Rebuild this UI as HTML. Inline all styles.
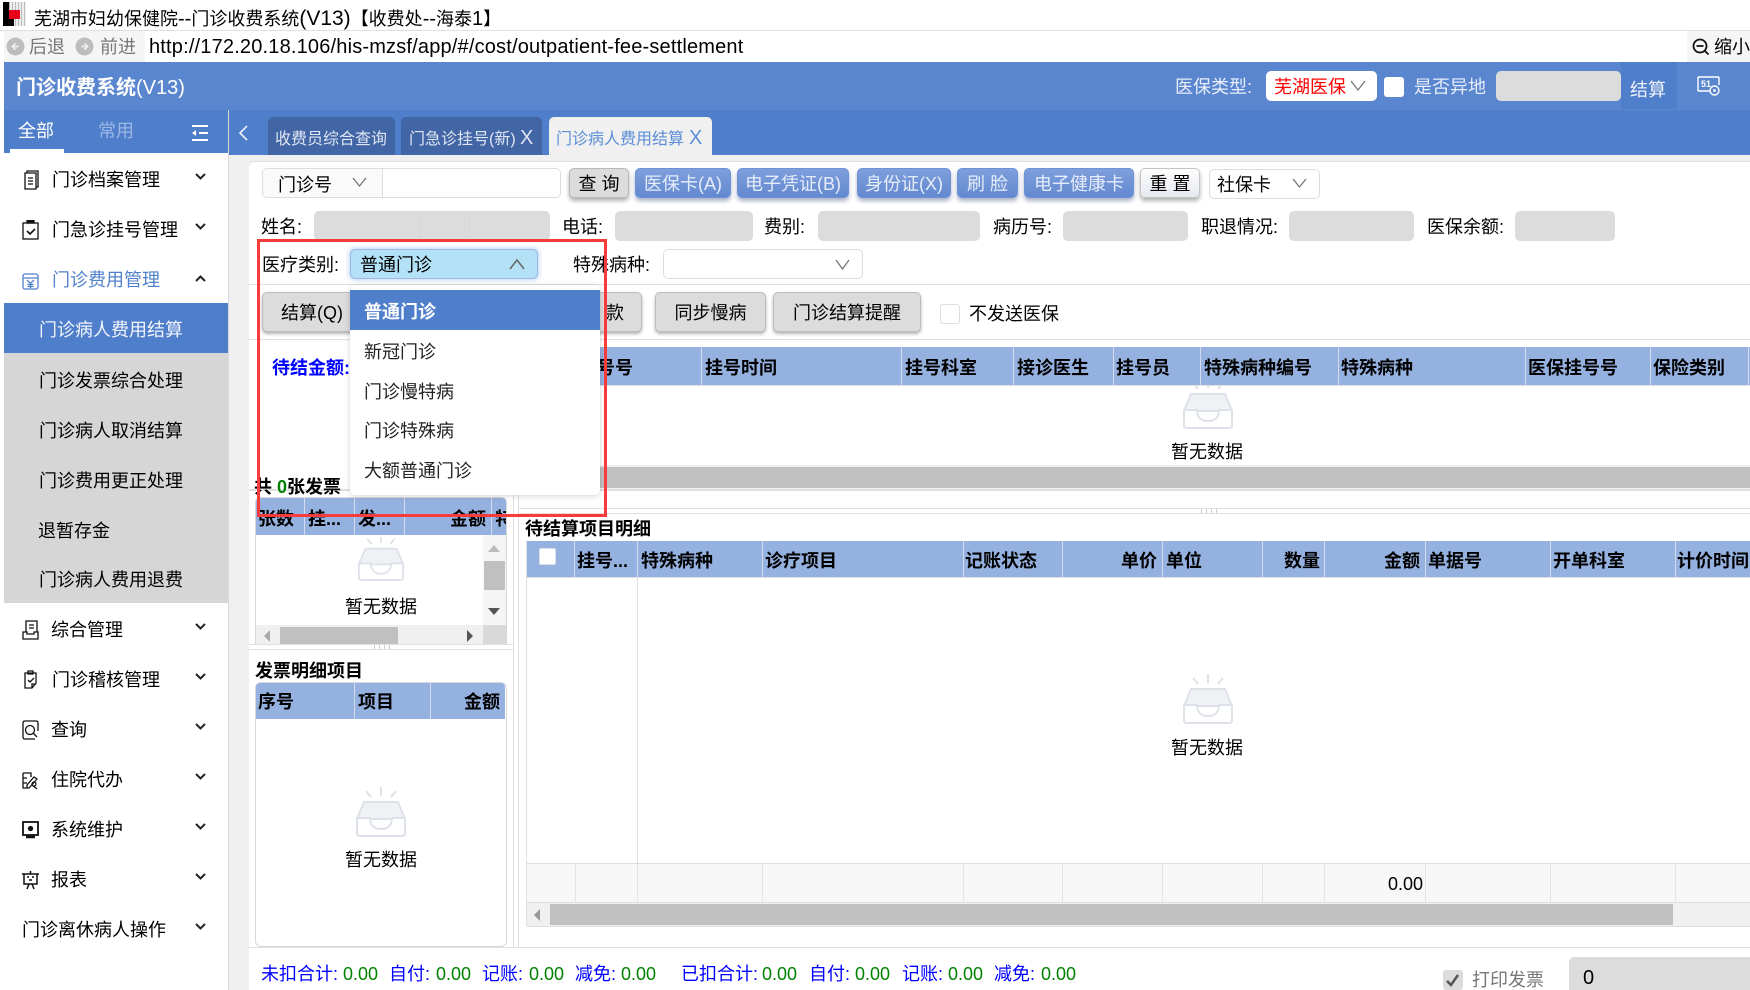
<!DOCTYPE html>
<html lang="zh"><head><meta charset="utf-8"><title>门诊收费系统</title>
<style>
html,body{margin:0;padding:0;width:1750px;height:990px;overflow:hidden;background:#fff}
body{position:relative;font-family:"Liberation Sans","WenQuanYi Zen Hei","Noto Sans CJK SC",sans-serif;font-size:18px;color:#000}
div,svg{position:absolute}
.t{white-space:nowrap;line-height:24px;height:24px;margin-top:1px}
.z{margin-top:0}
.b{font-weight:bold}
.r{text-align:right}
.c{text-align:center}
.ln{background:#e0e0e0}
.in{background:#dcdcdc;border-radius:5px;height:30px;top:211px}
.btn{border-radius:5px;text-align:center;line-height:30px;height:30px;top:168px;box-sizing:border-box;white-space:nowrap}
.bl{background:linear-gradient(#7f9fdc,#6289d0);border:1px solid #6d93d6;color:#e6edfa;box-shadow:0 3px 4px rgba(40,60,110,.4)}
.gr{background:#dcdcdc;border:1px solid #b8b8b8;box-shadow:0 3px 4px rgba(0,0,0,.3)}
.b4{background:#dcdcdc;border:1px solid #bdbdbd;border-radius:5px;top:292px;height:40px;line-height:40px;box-shadow:0 2px 3px rgba(0,0,0,.3);box-sizing:border-box;text-align:center;white-space:nowrap}
.th{background:#95b1e0}
.dv{background:#d4dceb;width:1px}
.m{left:52px}
.s{left:39px}
.ic{left:22px;width:17px;height:20px;fill:none;stroke:#111;stroke-width:1.3}
.ch{left:195px;width:11px;height:7px;fill:none;stroke:#222;stroke-width:2}
.bu{color:#00f}.gn{color:#008000}
.dd{left:364px}
</style></head><body>
<svg width="0" height="0" style="left:0;top:0"><defs>
<symbol id="em" viewBox="0 0 50 52">
<path d="M10 6l5 6M25 2v9M40 6l-5 6" stroke="#dde1e9" stroke-width="2" fill="none"/>
<path d="M8 17H42L49 34H1Z" fill="#eff1f4" stroke="#dde1e9" stroke-width="2" stroke-linejoin="round"/>
<path d="M1 33H14C14 40 18 44 25 44S36 40 36 33H49V48Q49 51 46 51H4Q1 51 1 48Z" fill="#fff" stroke="#dde1e9" stroke-width="2" stroke-linejoin="round"/>
</symbol></defs></svg>

<!-- title bar -->
<div style="left:3px;top:2px;width:23px;height:24px;background:repeating-linear-gradient(90deg,#bbb 0 1px,#eee 1px 3px)"></div>
<div style="left:3px;top:2px;width:6px;height:24px;background:#000"></div>
<div style="left:9px;top:10px;width:11px;height:9px;background:#e8001c"></div>
<div style="left:9px;top:19px;width:5px;height:7px;background:#000"></div>
<div class="t" style="left:34px;top:6px">芜湖市妇幼保健院<span style="font-size:20px">--</span>门诊收费系统<span style="font-size:21px">(V13)</span>【收费处<span style="font-size:20px">--</span>海泰<span style="font-size:20px">1</span>】</div>
<div class="ln" style="left:0;top:30px;width:1750px;height:1px"></div>

<!-- address bar -->
<div style="left:0;top:31px;width:4px;height:959px;background:#fff"></div>
<div style="left:4px;top:31px;width:141px;height:31px;background:#f5f5f5"></div>
<svg style="left:6px;top:37px" width="19" height="19" viewBox="0 0 18 18"><circle cx="9" cy="9" r="8.500" fill="#bdbdbd"/><path d="M12 9H6M9 6L6 9l3 3" stroke="#eee" stroke-width="1.600" fill="none"/></svg>
<svg style="left:75px;top:37px" width="19" height="19" viewBox="0 0 18 18"><circle cx="9" cy="9" r="8.500" fill="#bdbdbd"/><path d="M6 9h6M9 6l3 3-3 3" stroke="#eee" stroke-width="1.600" fill="none"/></svg>
<div class="t" style="left:29px;top:34px;color:#777">后退</div>
<div class="t" style="left:100px;top:34px;color:#777">前进</div>
<div class="t z" style="left:149px;top:35px;font-size:20px;letter-spacing:.18px">http://172.20.18.106/his-mzsf/app/#/cost/outpatient-fee-settlement</div>
<div style="left:1687px;top:31px;width:63px;height:31px;background:#f5f5f5"></div>
<svg style="left:1692px;top:38px" width="18" height="18" viewBox="0 0 18 18"><circle cx="8" cy="8" r="6.500" fill="none" stroke="#111" stroke-width="1.800"/><path d="M4.500 8h7M12.500 12.500l4 4" stroke="#111" stroke-width="1.800"/></svg>
<div class="t" style="left:1714px;top:34px">缩小</div>

<!-- header -->
<div style="left:4px;top:62px;width:1746px;height:48px;background:#5a86cf"></div>
<div class="t b" style="left:16px;top:75px;font-size:20px;color:#fff">门诊收费系统<span style="font-size:20px;font-weight:normal">(V13)</span></div>
<div class="t z" style="left:1175px;top:75px;color:#e8eefa">医保类型:</div>
<div style="left:1266px;top:71px;width:111px;height:30px;background:#fff;border-radius:5px"></div>
<div class="t z" style="left:1274px;top:75px;color:#f00">芜湖医保</div>
<svg style="left:1350px;top:80px" width="16" height="11" viewBox="0 0 16 11"><path d="M1 1l7 9 7-9" fill="none" stroke="#777" stroke-width="1.300"/></svg>
<div style="left:1384px;top:77px;width:20px;height:20px;background:#fff;border-radius:3px"></div>
<div class="t z" style="left:1414px;top:75px;color:#e8eefa">是否异地</div>
<div style="left:1496px;top:71px;width:125px;height:30px;background:#dcdcdc;border-radius:5px"></div>
<div style="left:1621px;top:62px;width:56px;height:47px;background:#4f7eca"></div>
<div class="t" style="left:1630px;top:77px;color:#f0f4fc">结算</div>
<svg style="left:1697px;top:76px" width="24" height="20" viewBox="0 0 24 20"><path d="M17 1H2Q1 1 1 2V14Q1 15 2 15H13" fill="none" stroke="#fff" stroke-width="1.400"/><path d="M17 1H21Q22 1 22 2V9" fill="none" stroke="#fff" stroke-width="1.400"/><circle cx="17.500" cy="14.500" r="4.500" fill="none" stroke="#fff" stroke-width="1.400"/><circle cx="17.500" cy="14.500" r="1.400" fill="#fff"/><text x="4" y="11" font-size="9" font-weight="bold" fill="#fff" font-family="Liberation Sans">51</text></svg>

<!-- sidebar -->
<div style="left:4px;top:110px;width:224px;height:880px;background:#fff"></div>
<div style="left:228px;top:110px;width:1px;height:880px;background:#d8d8d8"></div>
<div style="left:4px;top:110px;width:224px;height:43px;background:#4f7eca"></div>
<div class="t" style="left:18px;top:118px;color:#fff">全部</div>
<div style="left:10px;top:149px;width:54px;height:4px;background:#fff"></div>
<div class="t" style="left:98px;top:118px;color:#9db8e6">常用</div>
<svg style="left:192px;top:125px" width="16" height="16" viewBox="0 0 16 16"><path d="M0 1h16M7 8h9M0 15h16" stroke="#fff" stroke-width="2"/><path d="M0 8l4-3v6z" fill="#fff"/></svg>

<div class="t m z" style="top:168px">门诊档案管理</div>
<div class="t m z" style="top:218px">门急诊挂号管理</div>
<div class="t m z" style="top:268px;color:#5081c9">门诊费用管理</div>
<div style="left:4px;top:303px;width:224px;height:50px;background:#4f7eca"></div>
<div style="left:4px;top:353px;width:224px;height:250px;background:#d6d6d6"></div>
<div class="t s" style="top:317px;color:#f2f5fc">门诊病人费用结算</div>
<div class="t s" style="top:368px">门诊发票综合处理</div>
<div class="t s" style="top:418px">门诊病人取消结算</div>
<div class="t s" style="top:468px">门诊费用更正处理</div>
<div class="t s" style="left:38px;top:518px">退暂存金</div>
<div class="t s" style="top:567px">门诊病人费用退费</div>
<div class="t" style="left:51px;top:617px">综合管理</div>
<div class="t m z" style="top:668px">门诊稽核管理</div>
<div class="t z" style="left:51px;top:718px">查询</div>
<div class="t z" style="left:51px;top:768px">住院代办</div>
<div class="t z" style="left:51px;top:818px">系统维护</div>
<div class="t z" style="left:51px;top:868px">报表</div>
<div class="t z" style="left:22px;top:918px">门诊离休病人操作</div>

<svg class="ic" style="top:170px;left:23px" viewBox="0 0 17 20"><path d="M4 3V1H15V17H13M2 3H13V19H2ZM5 8H10M5 11H10M5 14H10"/></svg>
<svg class="ic" style="top:220px" viewBox="0 0 17 20"><rect x="1" y="3" width="15" height="16"/><rect x="5" y="0" width="7" height="3" fill="#111"/><path d="M5 11l3 3 5-5" stroke-width="1.600"/></svg>
<svg class="ic" style="top:271px;stroke:#5081c9" viewBox="0 0 17 18"><rect x="1" y="2" width="15" height="15" rx="2"/><path d="M1 6H16M5 8l3.500 3.500L12 8M8.500 11.500V16M5.500 12.500H11.500M5.500 14.500H11.500"/></svg>
<svg class="ic" style="top:620px" viewBox="0 0 17 20"><path d="M4 12V1H15V12M1 12H5V14H12V12H16V19H1ZM7 5H12M7 8H12"/></svg>
<svg class="ic" style="top:670px" viewBox="0 0 17 20"><path d="M3 3H14V13L10 18H3ZM6 1H11V4H6ZM6 10l2 2 4-4M10 18V14H14"/></svg>
<svg class="ic" style="top:720px" viewBox="0 0 17 20"><path d="M16 11V3Q16 1 14 1H3Q1 1 1 3V17Q1 19 3 19H13"/><circle cx="8" cy="10" r="4.500"/><path d="M11 13l4 4"/></svg>
<svg class="ic" style="top:770px" viewBox="0 0 17 20"><path d="M1 3H9V7M1 3V18H6M1 8H5M1 13H5M7 18l8-9-3-2-7 8v3zM10 15l5 4M14 14a2 2 0 100 .1"/></svg>
<svg class="ic" style="top:820px" viewBox="0 0 17 20"><rect x="1" y="2" width="15" height="13" stroke-width="1.800"/><circle cx="8.500" cy="8.500" r="2" fill="#111"/><path d="M4 17H13" stroke-width="2.500"/></svg>
<svg class="ic" style="top:870px" viewBox="0 0 17 20"><path d="M0 4H17M2 4V14H15V4M8.500 1V4M5 19l2-5M12 19l-2-5M5 7h2M10 7h2M7 10h3" stroke-width="1.500"/></svg>

<svg class="ch" style="top:173px" viewBox="0 0 11 7"><path d="M1 1l4.500 4.500L10 1"/></svg>
<svg class="ch" style="top:223px" viewBox="0 0 11 7"><path d="M1 1l4.500 4.500L10 1"/></svg>
<svg class="ch" style="top:275px" viewBox="0 0 11 7"><path d="M1 6l4.500-4.500L10 6"/></svg>
<svg class="ch" style="top:623px" viewBox="0 0 11 7"><path d="M1 1l4.500 4.500L10 1"/></svg>
<svg class="ch" style="top:673px" viewBox="0 0 11 7"><path d="M1 1l4.500 4.500L10 1"/></svg>
<svg class="ch" style="top:723px" viewBox="0 0 11 7"><path d="M1 1l4.500 4.500L10 1"/></svg>
<svg class="ch" style="top:773px" viewBox="0 0 11 7"><path d="M1 1l4.500 4.500L10 1"/></svg>
<svg class="ch" style="top:823px" viewBox="0 0 11 7"><path d="M1 1l4.500 4.500L10 1"/></svg>
<svg class="ch" style="top:873px" viewBox="0 0 11 7"><path d="M1 1l4.500 4.500L10 1"/></svg>
<svg class="ch" style="top:923px" viewBox="0 0 11 7"><path d="M1 1l4.500 4.500L10 1"/></svg>

<!-- tabs -->
<div style="left:229px;top:110px;width:1521px;height:45px;background:#4f7eca"></div>
<div style="left:229px;top:155px;width:1521px;height:835px;background:#f0f0f0"></div>
<svg style="left:238px;top:125px" width="11" height="16" viewBox="0 0 11 16"><path d="M9 1L2 8l7 7" fill="none" stroke="#eef2fb" stroke-width="1.600"/></svg>
<div style="left:268px;top:117px;width:127px;height:38px;background:#4265a6;border-radius:5px 5px 0 0"></div>
<div class="t" style="left:275px;top:127px;font-size:16px;color:#dfe6f3">收费员综合查询</div>
<div style="left:401px;top:117px;width:141px;height:38px;background:#4265a6;border-radius:5px 5px 0 0"></div>
<div class="t" style="left:409px;top:127px;font-size:16px;color:#dfe6f3">门急诊挂号(新)</div>
<div class="t" style="left:520px;top:125px;font-size:20px;color:#dfe6f3">X</div>
<div style="left:549px;top:117px;width:163px;height:38px;background:#f0f0f0;border-radius:5px 5px 0 0"></div>
<div class="t" style="left:556px;top:127px;font-size:16px;color:#5b8ed6">门诊病人费用结算</div>
<div class="t" style="left:689px;top:125px;font-size:20px;color:#5b8ed6">X</div>

<!-- content -->
<div style="left:249px;top:162px;width:1501px;height:828px;background:#fff;border-radius:5px 0 0 0;box-shadow:0 -1px 0 #dfdfdf"></div>

<!-- row 1 -->
<div style="left:262px;top:168px;width:299px;height:30px;border:1px solid #ddd;border-radius:5px;box-sizing:border-box"></div>
<div style="left:263px;top:169px;width:119px;height:28px;background:#fafafa;border-right:1px solid #ddd;border-radius:5px 0 0 5px"></div>
<div class="t" style="left:278px;top:172px">门诊号</div>
<svg style="left:352px;top:177px" width="15" height="11" viewBox="0 0 15 11"><path d="M1 1l6.500 8L14 1" fill="none" stroke="#777" stroke-width="1.300"/></svg>
<div class="btn gr" style="left:569px;width:60px">查 询</div>
<div class="btn bl" style="left:635px;width:96px">医保卡(A)</div>
<div class="btn bl" style="left:737px;width:112px">电子凭证(B)</div>
<div class="btn bl" style="left:857px;width:94px">身份证(X)</div>
<div class="btn bl" style="left:957px;width:61px">刷 脸</div>
<div class="btn bl" style="left:1024px;width:110px">电子健康卡</div>
<div class="btn" style="left:1140px;width:60px;background:linear-gradient(#fdfdfd,#e6e9f1);border:1px solid #c4c4c4;box-shadow:0 3px 4px rgba(0,0,0,.3)">重 置</div>
<div style="left:1209px;top:169px;width:111px;height:30px;border:1px solid #ddd;border-radius:5px;box-sizing:border-box"></div>
<div class="t" style="left:1217px;top:172px">社保卡</div>
<svg style="left:1292px;top:178px" width="15" height="11" viewBox="0 0 15 11"><path d="M1 1l6.500 8L14 1" fill="none" stroke="#777" stroke-width="1.300"/></svg>

<!-- row 2 -->
<div class="t" style="left:261px;top:214px">姓名:</div>
<div class="in" style="left:314px;width:236px"></div>
<div style="left:420px;top:211px;width:1px;height:30px;background:#d7d7d7"></div>
<div style="left:469px;top:211px;width:1px;height:30px;background:#d7d7d7"></div>
<div class="t" style="left:562px;top:214px">电话:</div>
<div class="in" style="left:615px;width:138px"></div>
<div class="t" style="left:764px;top:214px">费别:</div>
<div class="in" style="left:818px;width:162px"></div>
<div class="t" style="left:993px;top:214px">病历号:</div>
<div class="in" style="left:1063px;width:125px"></div>
<div class="t" style="left:1201px;top:214px">职退情况:</div>
<div class="in" style="left:1289px;width:125px"></div>
<div class="t" style="left:1427px;top:214px">医保余额:</div>
<div class="in" style="left:1515px;width:100px"></div>

<!-- row 3 -->
<div class="t z" style="left:262px;top:253px">医疗类别:</div>
<div style="left:350px;top:249px;width:188px;height:30px;background:#b3e1f5;border:1px solid #a0b8e4;border-radius:5px;box-sizing:border-box;box-shadow:0 0 3px 2px #d3e3fa"></div>
<div class="t z" style="left:360px;top:253px">普通门诊</div>
<svg style="left:509px;top:258px" width="16" height="12" viewBox="0 0 16 12"><path d="M1 11L8 2l7 9" fill="none" stroke="#666" stroke-width="1.500"/></svg>
<div class="t z" style="left:573px;top:253px">特殊病种:</div>
<div style="left:663px;top:249px;width:200px;height:30px;border:1px solid #ddd;border-radius:5px;box-sizing:border-box"></div>
<svg style="left:835px;top:259px" width="15" height="11" viewBox="0 0 15 11"><path d="M1 1l6.500 9L14 1" fill="none" stroke="#777" stroke-width="1.300"/></svg>
<div class="ln" style="left:249px;top:284px;width:1501px;height:1px"></div>

<!-- row 4 -->
<div class="b4" style="left:262px;width:120px;text-align:left;padding-left:18px">结算(Q)</div>
<div class="b4" style="left:500px;width:142px;text-align:right;padding-right:17px">退&nbsp; 款</div>
<div class="b4" style="left:655px;width:111px">同步慢病</div>
<div class="b4" style="left:773px;width:148px">门诊结算提醒</div>
<div style="left:940px;top:304px;width:20px;height:20px;border:1px solid #ddd;border-radius:3px;box-sizing:border-box"></div>
<div class="t" style="left:969px;top:301px">不发送医保</div>
<div class="ln" style="left:249px;top:339px;width:1501px;height:1px"></div>

<!-- top table -->
<div class="t b bu" style="left:272px;top:355px">待结金额:</div>
<div class="th" style="left:500px;top:347px;width:1250px;height:38px"></div>
<div class="ln" style="left:500px;top:385px;width:1250px;height:1px"></div>
<div class="dv" style="left:701px;top:347px;height:38px"></div>
<div class="dv" style="left:901px;top:347px;height:38px"></div>
<div class="dv" style="left:1013px;top:347px;height:38px"></div>
<div class="dv" style="left:1113px;top:347px;height:38px"></div>
<div class="dv" style="left:1200px;top:347px;height:38px"></div>
<div class="dv" style="left:1338px;top:347px;height:38px"></div>
<div class="dv" style="left:1525px;top:347px;height:38px"></div>
<div class="dv" style="left:1650px;top:347px;height:38px"></div>
<div class="dv" style="left:1748px;top:347px;height:38px"></div>
<div class="t b" style="left:597px;top:355px">号号</div>
<div class="t b" style="left:705px;top:355px">挂号时间</div>
<div class="t b" style="left:905px;top:355px">挂号科室</div>
<div class="t b" style="left:1017px;top:355px">接诊医生</div>
<div class="t b" style="left:1116px;top:355px">挂号员</div>
<div class="t b" style="left:1204px;top:355px">特殊病种编号</div>
<div class="t b" style="left:1341px;top:355px">特殊病种</div>
<div class="t b" style="left:1528px;top:355px">医保挂号号</div>
<div class="t b" style="left:1653px;top:355px">保险类别</div>
<div style="left:1183px;top:386px;width:50px;height:43px;overflow:hidden"><svg style="left:0;top:-9px" width="50" height="52"><use href="#em"/></svg></div>
<div class="t c" style="left:1171px;top:439px">暂无数据</div>
<div style="left:600px;top:465px;width:1150px;height:24px;background:#f0f0f0"></div>
<div style="left:600px;top:467px;width:1150px;height:21px;background:#c0c0c0"></div>
<div class="ln" style="left:249px;top:489px;width:1501px;height:2px"></div>
<div class="ln" style="left:519px;top:508px;width:1231px;height:1px"></div>
<div class="ln" style="left:519px;top:513px;width:1231px;height:1px"></div>
<div style="left:1201px;top:509px;width:17px;height:4px;background:repeating-linear-gradient(90deg,#ccc 0 1px,#fff 1px 5px)"></div>

<!-- left table 1 -->
<div class="t b" style="left:254px;top:474px">共 <span class="gn">0</span>张发票</div>
<div style="left:255px;top:497px;width:252px;height:148px;border:1px solid #d8d8d8;border-radius:5px 5px 0 0;box-sizing:border-box"></div>
<div class="th" style="left:256px;top:498px;width:250px;height:37px;border-radius:4px 4px 0 0;overflow:hidden">
<div class="dv" style="left:48px;top:0;height:37px"></div>
<div class="dv" style="left:98px;top:0;height:37px"></div>
<div class="dv" style="left:148px;top:0;height:37px"></div>
<div class="dv" style="left:235px;top:0;height:37px"></div>
<div class="t b" style="left:2px;top:8px">张数</div>
<div class="t b" style="left:52px;top:8px">挂...</div>
<div class="t b" style="left:102px;top:8px">发...</div>
<div class="t b" style="left:194px;top:8px">金额</div>
<div class="t b" style="left:239px;top:8px">特殊</div>
</div>
<svg style="left:356px;top:537px" width="50" height="48" viewBox="0 4 50 48"><use href="#em"/></svg>
<div class="t" style="left:345px;top:594px">暂无数据</div>
<div style="left:483px;top:535px;width:23px;height:90px;background:#f5f5f5"></div>
<div style="left:484px;top:561px;width:21px;height:29px;background:#c0c0c0"></div>
<svg style="left:488px;top:544px" width="12" height="9"><path d="M0 8L6 1l6 7z" fill="#bbb"/></svg>
<svg style="left:488px;top:607px" width="12" height="9"><path d="M0 1h12L6 8z" fill="#555"/></svg>
<div style="left:256px;top:625px;width:227px;height:19px;background:#f0f0f0"></div>
<div style="left:483px;top:625px;width:23px;height:19px;background:#d9d9d9"></div>
<div style="left:280px;top:627px;width:118px;height:17px;background:#c0c0c0"></div>
<svg style="left:264px;top:630px" width="7" height="12"><path d="M6 0v12L0 6z" fill="#aaa"/></svg>
<svg style="left:467px;top:630px" width="7" height="12"><path d="M0 0v12l6-6z" fill="#555"/></svg>
<div class="ln" style="left:249px;top:644px;width:264px;height:1px"></div>
<div class="ln" style="left:249px;top:649px;width:264px;height:1px"></div>
<div style="left:374px;top:645px;width:17px;height:4px;background:repeating-linear-gradient(90deg,#ccc 0 1px,#fff 1px 5px)"></div>

<!-- left table 2 -->
<div class="t b" style="left:255px;top:658px">发票明细项目</div>
<div style="left:255px;top:682px;width:252px;height:265px;border:1px solid #d8d8d8;border-radius:6px;box-sizing:border-box"></div>
<div class="th" style="left:256px;top:683px;width:249px;height:36px;border-radius:4px 4px 0 0">
<div class="dv" style="left:98px;top:0;height:36px"></div>
<div class="dv" style="left:174px;top:0;height:36px"></div>
<div class="t b" style="left:2px;top:6px">序号</div>
<div class="t b" style="left:102px;top:6px">项目</div>
<div class="t b" style="left:208px;top:6px">金额</div>
</div>
<svg style="left:356px;top:785px" width="50" height="52"><use href="#em"/></svg>
<div class="t" style="left:345px;top:847px">暂无数据</div>

<!-- splitter -->
<div class="ln" style="left:513px;top:514px;width:1px;height:433px"></div>
<div class="ln" style="left:518px;top:491px;width:1px;height:456px"></div>
<div class="ln" style="left:513px;top:491px;width:1px;height:23px"></div>

<!-- right table -->
<div class="t b" style="left:525px;top:516px">待结算项目明细</div>
<div class="th" style="left:526px;top:541px;width:1224px;height:36px"></div>
<div class="ln" style="left:526px;top:577px;width:1224px;height:1px"></div>
<div class="dv" style="left:574px;top:541px;height:36px"></div>
<div class="dv" style="left:637px;top:541px;height:36px"></div>
<div class="dv" style="left:762px;top:541px;height:36px"></div>
<div class="dv" style="left:963px;top:541px;height:36px"></div>
<div class="dv" style="left:1062px;top:541px;height:36px"></div>
<div class="dv" style="left:1162px;top:541px;height:36px"></div>
<div class="dv" style="left:1262px;top:541px;height:36px"></div>
<div class="dv" style="left:1324px;top:541px;height:36px"></div>
<div class="dv" style="left:1425px;top:541px;height:36px"></div>
<div class="dv" style="left:1550px;top:541px;height:36px"></div>
<div class="dv" style="left:1675px;top:541px;height:36px"></div>
<div style="left:539px;top:548px;width:17px;height:17px;background:#fff;border:1px solid #d8dfee;border-radius:2px;box-sizing:border-box"></div>
<div class="t b" style="left:577px;top:548px">挂号...</div>
<div class="t b" style="left:641px;top:548px">特殊病种</div>
<div class="t b" style="left:765px;top:548px">诊疗项目</div>
<div class="t b" style="left:965px;top:548px">记账状态</div>
<div class="t b" style="left:1121px;top:548px">单价</div>
<div class="t b" style="left:1166px;top:548px">单位</div>
<div class="t b" style="left:1284px;top:548px">数量</div>
<div class="t b" style="left:1384px;top:548px">金额</div>
<div class="t b" style="left:1428px;top:548px">单据号</div>
<div class="t b" style="left:1553px;top:548px">开单科室</div>
<div class="t b" style="left:1677px;top:548px">计价时间</div>
<div class="ln" style="left:526px;top:541px;width:1px;height:385px"></div>
<div class="ln" style="left:637px;top:578px;width:1px;height:285px"></div>
<svg style="left:1183px;top:672px" width="50" height="52"><use href="#em"/></svg>
<div class="t" style="left:1171px;top:735px">暂无数据</div>
<div style="left:527px;top:863px;width:1223px;height:40px;background:#f7f7f7;border-top:1px solid #ddd;border-bottom:1px solid #ddd;box-sizing:border-box"></div>
<div class="dv" style="left:575px;top:864px;height:38px;background:#e4e4e4"></div>
<div class="dv" style="left:637px;top:864px;height:38px;background:#e4e4e4"></div>
<div class="dv" style="left:762px;top:864px;height:38px;background:#e4e4e4"></div>
<div class="dv" style="left:963px;top:864px;height:38px;background:#e4e4e4"></div>
<div class="dv" style="left:1062px;top:864px;height:38px;background:#e4e4e4"></div>
<div class="dv" style="left:1162px;top:864px;height:38px;background:#e4e4e4"></div>
<div class="dv" style="left:1262px;top:864px;height:38px;background:#e4e4e4"></div>
<div class="dv" style="left:1324px;top:864px;height:38px;background:#e4e4e4"></div>
<div class="dv" style="left:1425px;top:864px;height:38px;background:#e4e4e4"></div>
<div class="dv" style="left:1550px;top:864px;height:38px;background:#e4e4e4"></div>
<div class="dv" style="left:1675px;top:864px;height:38px;background:#e4e4e4"></div>
<div class="t" style="left:1388px;top:871px">0.00</div>
<div style="left:527px;top:903px;width:1223px;height:23px;background:#f0f0f0;border-bottom:1px solid #ddd;box-sizing:content-box"></div>
<div style="left:550px;top:904px;width:1123px;height:21px;background:#c0c0c0"></div>
<svg style="left:534px;top:909px" width="7" height="12"><path d="M6 0v12L0 6z" fill="#999"/></svg>

<!-- footer -->
<div class="ln" style="left:249px;top:947px;width:1501px;height:1px"></div>
<div class="t bu" style="left:261px;top:961px">未扣合计:</div><div class="t gn" style="left:343px;top:961px">0.00</div>
<div class="t bu" style="left:389px;top:961px">自付:</div><div class="t gn" style="left:436px;top:961px">0.00</div>
<div class="t bu" style="left:482px;top:961px">记账:</div><div class="t gn" style="left:529px;top:961px">0.00</div>
<div class="t bu" style="left:575px;top:961px">减免:</div><div class="t gn" style="left:621px;top:961px">0.00</div>
<div class="t bu" style="left:681px;top:961px">已扣合计:</div><div class="t gn" style="left:762px;top:961px">0.00</div>
<div class="t bu" style="left:809px;top:961px">自付:</div><div class="t gn" style="left:855px;top:961px">0.00</div>
<div class="t bu" style="left:902px;top:961px">记账:</div><div class="t gn" style="left:948px;top:961px">0.00</div>
<div class="t bu" style="left:994px;top:961px">减免:</div><div class="t gn" style="left:1041px;top:961px">0.00</div>
<div style="left:1443px;top:970px;width:20px;height:20px;background:#dcdcdc;border-radius:3px"></div>
<svg style="left:1446px;top:974px" width="14" height="13"><path d="M1 7l4 4 7-10" fill="none" stroke="#555" stroke-width="2.500"/></svg>
<div class="t z" style="left:1472px;top:968px;color:#777">打印发票</div>
<div style="left:1569px;top:957px;width:181px;height:33px;background:#dcdcdc;border-radius:5px 0 0 0"></div>
<div class="t z" style="left:1583px;top:966px;font-size:20px">0</div>

<!-- dropdown -->
<div style="left:350px;top:285px;width:250px;height:210px;background:#fff;border-radius:5px;box-shadow:0 1px 6px rgba(0,0,0,.18)"></div>
<div style="left:350px;top:290px;width:250px;height:40px;background:#4f7eca"></div>
<div class="t b dd" style="top:299px;color:#fff">普通门诊</div>
<div class="t dd" style="top:339px;color:#222">新冠门诊</div>
<div class="t dd" style="top:379px;color:#222">门诊慢特病</div>
<div class="t dd" style="top:418px;color:#222">门诊特殊病</div>
<div class="t dd" style="top:458px;color:#222">大额普通门诊</div>

<!-- annotation -->
<div style="left:257px;top:239px;width:350px;height:278px;border:3px solid #f63b3b;box-sizing:border-box"></div>
</body></html>
